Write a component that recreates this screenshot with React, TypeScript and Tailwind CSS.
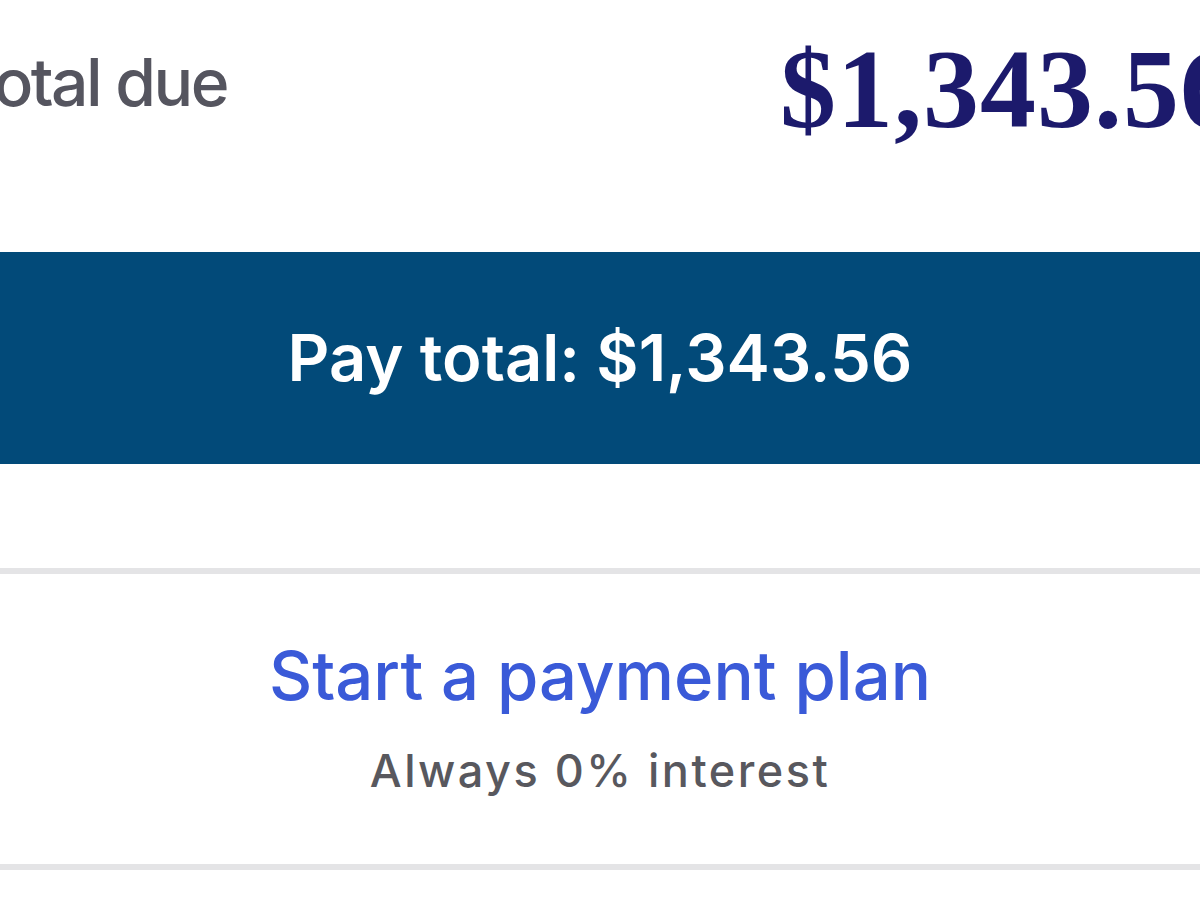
import React from "react";

export default function App() {
  return (
    <div className="w-[1200px] h-[900px] overflow-hidden bg-white">
      <div className="ml-[-60px] w-[1320px] font-['Inter',_'Liberation_Sans',_sans-serif]">
        <div className="flex items-start h-[252px]">
          <div className="w-[840px] pl-[18px] pt-[49px] text-[66px] leading-none font-medium text-[#55555f] tracking-[-2.5px]">
            Total due
          </div>
          <div className="pt-[33px] text-[112px] leading-none font-bold text-[#1c1a6c] font-['Liberation_Serif',_serif] whitespace-nowrap tracking-[1px]">
            $1,343.56
          </div>
        </div>
        <div className="h-[212px] bg-[#024a79] flex items-center justify-center">
          <span className="text-[65px] font-semibold text-white leading-none mt-[-2px]">Pay total: $1,343.56</span>
        </div>
        <div className="h-[104px]" />
        <div className="h-[6px] bg-[#e4e4e6]" />
        <div className="h-[290px] flex flex-col items-center">
          <div className="mt-[68px] text-[67px] leading-none font-medium text-[#3a5ad8]">Start a payment plan</div>
          <div className="mt-[39px] text-[45px] leading-none font-medium text-[#58585e] tracking-[2.5px]">Always 0% interest</div>
        </div>
        <div className="h-[6px] bg-[#e4e4e6]" />
      </div>
    </div>
  );
}
